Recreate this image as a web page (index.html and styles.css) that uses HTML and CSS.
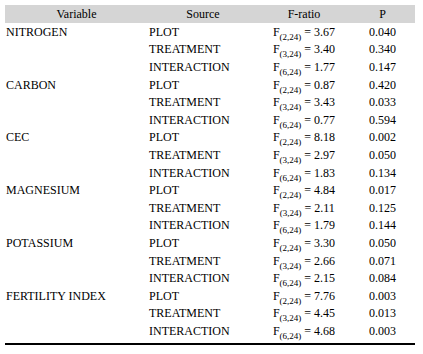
FILE: index.html
```html
<!DOCTYPE html>
<html>
<head>
<meta charset="utf-8">
<link rel="stylesheet" href="styles.css">
</head>
<body>
<div class="wrap">
<table class="anova">
<colgroup><col class="c1"><col class="c2"><col class="c3"><col class="c4"></colgroup>
<thead>
<tr><th>Variable</th><th>Source</th><th>F-ratio</th><th>P</th></tr>
</thead>
<tbody>
<tr><td>NITROGEN</td><td>PLOT</td><td class="f">F<sub>(2,24)</sub> = 3.67</td><td class="p">0.040</td></tr>
<tr><td></td><td>TREATMENT</td><td class="f">F<sub>(3,24)</sub> = 3.40</td><td class="p">0.340</td></tr>
<tr><td></td><td>INTERACTION</td><td class="f">F<sub>(6,24)</sub> = 1.77</td><td class="p">0.147</td></tr>
<tr><td>CARBON</td><td>PLOT</td><td class="f">F<sub>(2,24)</sub> = 0.87</td><td class="p">0.420</td></tr>
<tr><td></td><td>TREATMENT</td><td class="f">F<sub>(3,24)</sub> = 3.43</td><td class="p">0.033</td></tr>
<tr><td></td><td>INTERACTION</td><td class="f">F<sub>(6,24)</sub> = 0.77</td><td class="p">0.594</td></tr>
<tr><td>CEC</td><td>PLOT</td><td class="f">F<sub>(2,24)</sub> = 8.18</td><td class="p">0.002</td></tr>
<tr><td></td><td>TREATMENT</td><td class="f">F<sub>(3,24)</sub> = 2.97</td><td class="p">0.050</td></tr>
<tr><td></td><td>INTERACTION</td><td class="f">F<sub>(6,24)</sub> = 1.83</td><td class="p">0.134</td></tr>
<tr><td>MAGNESIUM</td><td>PLOT</td><td class="f">F<sub>(2,24)</sub> = 4.84</td><td class="p">0.017</td></tr>
<tr><td></td><td>TREATMENT</td><td class="f">F<sub>(3,24)</sub> = 2.11</td><td class="p">0.125</td></tr>
<tr><td></td><td>INTERACTION</td><td class="f">F<sub>(6,24)</sub> = 1.79</td><td class="p">0.144</td></tr>
<tr><td>POTASSIUM</td><td>PLOT</td><td class="f">F<sub>(2,24)</sub> = 3.30</td><td class="p">0.050</td></tr>
<tr><td></td><td>TREATMENT</td><td class="f">F<sub>(3,24)</sub> = 2.66</td><td class="p">0.071</td></tr>
<tr><td></td><td>INTERACTION</td><td class="f">F<sub>(6,24)</sub> = 2.15</td><td class="p">0.084</td></tr>
<tr><td>FERTILITY INDEX</td><td>PLOT</td><td class="f">F<sub>(2,24)</sub> = 7.76</td><td class="p">0.003</td></tr>
<tr><td></td><td>TREATMENT</td><td class="f">F<sub>(3,24)</sub> = 4.45</td><td class="p">0.013</td></tr>
<tr><td></td><td>INTERACTION</td><td class="f">F<sub>(6,24)</sub> = 4.68</td><td class="p">0.003</td></tr>
</tbody>
</table>
</div>
</body>
</html>
```
FILE: styles.css
```css
html, body {
  margin: 0;
  padding: 0;
  background: #fff;
}
body {
  font-family: "Liberation Serif", "Times New Roman", serif;
  font-size: 12px;
  color: #000;
}
.wrap {
  margin: 5px 0 0 5px;
  width: 410px;
  padding-bottom: 3px;
  border-bottom: 2px solid #000;
}
.anova {
  border-collapse: collapse;
  table-layout: fixed;
  width: 410px;
}
.c1 { width: 143px; }
.c2 { width: 110px; }
.c3 { width: 92px; }
.c4 { width: 65px; }
.anova th {
  background: #d5d5d5;
  font-weight: normal;
  text-align: center;
  height: 18px;
  padding: 0;
  line-height: 18px;
}
.anova td {
  height: 17.6px;
  padding: 0 0 0 1px;
  line-height: 14px;
  white-space: nowrap;
}
.anova td.f, .anova td.p {
  text-align: center;
  padding: 0;
}
.anova sub {
  font-size: 9px;
  vertical-align: -4px;
  line-height: 0;
}
```
